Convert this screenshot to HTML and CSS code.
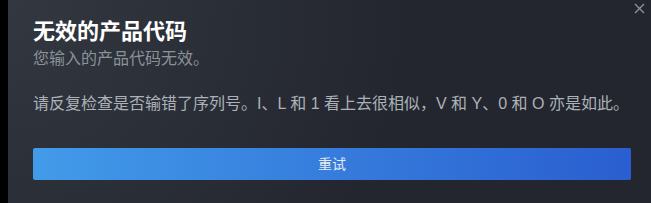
FILE: index.html
```html
<!DOCTYPE html>
<html lang="zh-CN">
<head>
    <meta charset="UTF-8">
    <title>无效的产品代码</title>
    <link rel="stylesheet" href="styles.css">
</head>
<body>
<div class="dialog">
    <div class="close">
        <svg width="11" height="11" viewBox="0 0 11 11">
            <path d="M1 1 L10 10 M10 1 L1 10" stroke="#8b929a" stroke-width="1.4" fill="none"/>
        </svg>
    </div>
    <h1 class="title">无效的产品代码</h1>
    <div class="sub">您输入的产品代码无效。</div>
    <p class="body">请反复检查是否输错了序列号。I、L 和 1 看上去很相似，V 和 Y、0 和 O 亦是如此。</p>
    <div class="btn">重试</div>
</div>
</body>
</html>
```

FILE: styles.css
```css
* {
    margin: 0;
    padding: 0;
}

html, body {
    height: 100%;
}

body {
    background: #000;
    font-family: "Liberation Sans", "Noto Sans CJK SC", sans-serif;
}

.dialog {
    margin-left: 8px;
    height: 203px;
    padding: 18px 20px 0 25px;
    box-sizing: border-box;
    position: relative;
    background: radial-gradient(circle at top left, rgba(74, 81, 92, 0.4) 0%, rgba(75, 81, 92, 0) 60%), #23262e;
}

.close {
    position: absolute;
    top: 3px;
    right: 6px;
    width: 11px;
    height: 11px;
}

.close svg {
    display: block;
}

.title {
    font-size: 22px;
    line-height: 28px;
    font-weight: 700;
    color: #fff;
}

.sub {
    margin-top: 3px;
    font-size: 16px;
    line-height: 20px;
    color: #8b929a;
}

.body {
    margin-top: 25px;
    font-size: 16px;
    line-height: 20px;
    color: #acb2b8;
}

.btn {
    margin-top: 34px;
    height: 32px;
    line-height: 32px;
    border-radius: 2px;
    text-align: center;
    font-size: 14px;
    color: #e6ebf0;
    background: linear-gradient(to right, #429be9, #2a5ed0);
}
```
